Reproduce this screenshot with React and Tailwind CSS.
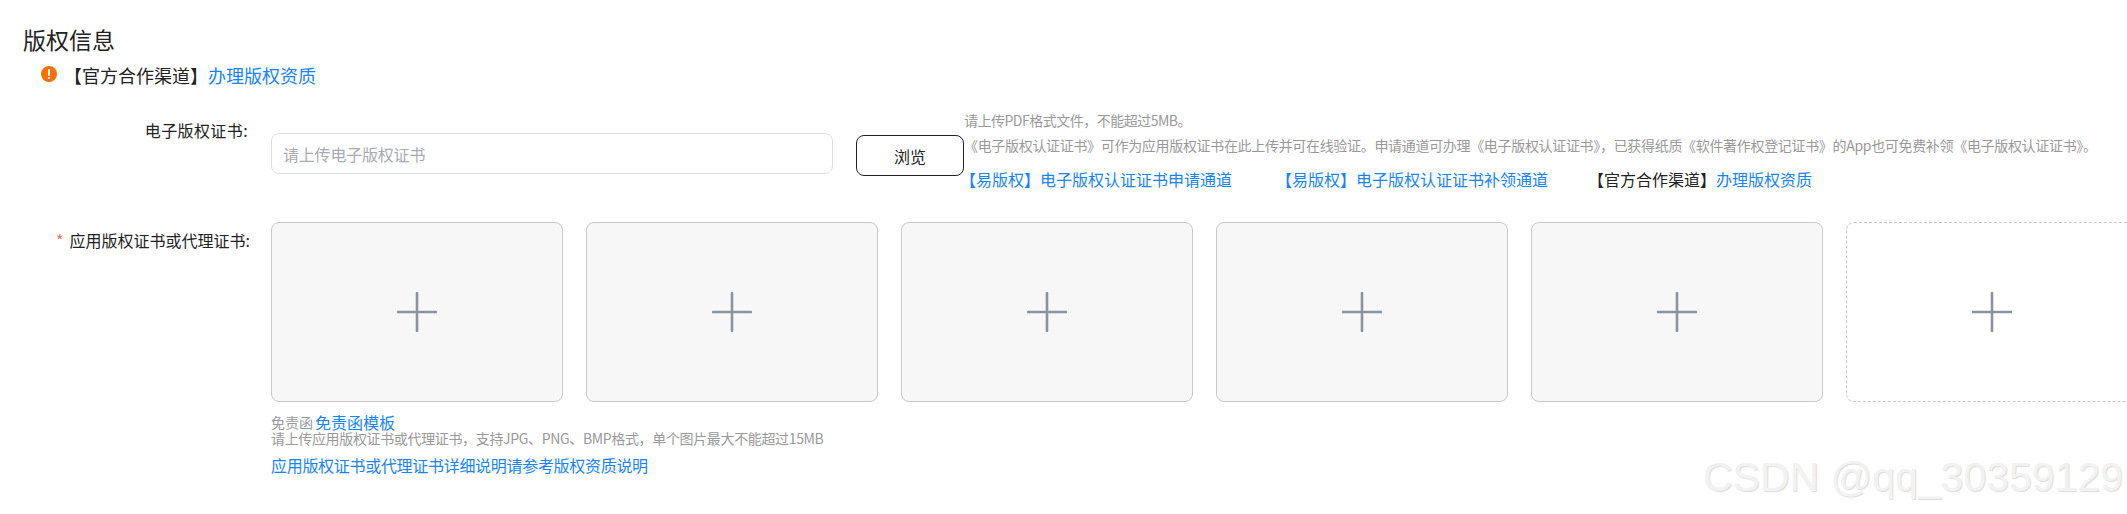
const FONT = "font-['Noto_Sans_CJK_SC','Liberation_Sans',sans-serif]";
const COMMA = "\uFF0C";

function Plus() {
  return (
    <svg width="40" height="40" viewBox="0 0 40 40" fill="none" stroke="#8c939d" strokeWidth="2.6" strokeLinecap="round">
      <path d="M20 1V39M1 20H39" />
    </svg>
  );
}

function Card({ dashed }) {
  return (
    <div
      className={
        "w-[292px] h-[180px] shrink-0 flex items-center justify-center rounded-lg border " +
        (dashed ? "border-dashed border-[#c9c9c9] bg-white" : "border-[#c9c9c9] bg-[#f7f7f7]")
      }
    >
      <Plus />
    </div>
  );
}

export default function App() {
  return (
    <div className={"relative w-[2127px] h-[514px] overflow-hidden bg-white text-[#222] " + FONT}>
      <div className="pt-[24px] pl-[23px]">
        <h2 className="text-[23px] leading-[30px] font-normal">版权信息</h2>
        <div className="mt-[6px] ml-[18px] flex items-center h-[30px]">
          <svg width="16" height="16" viewBox="0 0 16 16" className="-mt-[3px]">
            <circle cx="8" cy="8" r="8" fill="#fa6f00" />
            <rect x="7" y="3" width="2" height="7" rx="1" fill="#fff" />
            <rect x="7" y="11" width="2" height="2" rx="1" fill="#fff" />
          </svg>
          <span className="ml-[7px] text-[18px] leading-[30px]">
            【官方合作渠道】<a className="text-[#1684fc]">办理版权资质</a>
          </span>
        </div>
      </div>

      <div className="flex mt-[2px]">
        <div className="w-[248px] shrink-0 pt-[26px] text-right text-[16px] leading-[24px] tracking-[0.4px]">电子版权证书:</div>
        <div className="ml-[23px] flex items-start">
          <div className="mt-[41px] w-[562px] h-[41px] flex items-center rounded-lg border border-[#dcdfe6] px-[11px] text-[16px] tracking-[-0.2px] text-[#a8abb2]">
            请上传电子版权证书
          </div>
          <button className="mt-[43px] ml-[23px] w-[108px] h-[41px] rounded-lg border border-[#222] text-[16px] bg-white">
            浏览
          </button>
          <div className="pt-[18px]">
            <div className="text-[14px] leading-[20px] text-[#999] tracking-[-0.5px]">请上传PDF格式文件{COMMA}不能超过5MB。</div>
            <div className="mt-[3px] text-[14px] leading-[24px] text-[#999] whitespace-nowrap tracking-[-0.32px]">
              《电子版权认证证书》可作为应用版权证书在此上传并可在线验证。申请通道可办理《电子版权认证证书》{COMMA}已获得纸质《软件著作权登记证书》的App也可免费补领《电子版权认证证书》。
            </div>
            <div className="mt-[10px] ml-[-4px] flex text-[16px] leading-[24px] whitespace-nowrap">
              <a className="w-[316px] text-[#1684fc]">【易版权】电子版权认证证书申请通道</a>
              <a className="w-[312px] text-[#1684fc]">【易版权】电子版权认证证书补领通道</a>
              <span>【官方合作渠道】<a className="text-[#1684fc]">办理版权资质</a></span>
            </div>
          </div>
        </div>
      </div>

      <div className="flex mt-[31px]">
        <div className="w-[250px] shrink-0 text-right text-[16px] leading-[24px] mt-[6px]">
          <span className="text-[#f56c6c] mr-[6px]">*</span>应用版权证书或代理证书:
        </div>
        <div className="ml-[21px]">
          <div className="flex gap-[23px]">
            <Card />
            <Card />
            <Card />
            <Card />
            <Card />
            <Card dashed />
          </div>
          <div className="mt-[12px] leading-[16px] h-[16px] flex items-center">
            <span className="text-[14px] leading-[16px] text-[#999]">免责函</span>
            <a className="ml-[2px] text-[16px] leading-[16px] text-[#1684fc]">免责函模板</a>
          </div>
          <div className="mt-[1px] text-[14px] leading-[14px] text-[#999] whitespace-nowrap tracking-[-0.35px]">
            请上传应用版权证书或代理证书{COMMA}支持JPG、PNG、BMP格式{COMMA}单个图片最大不能超过15MB
          </div>
          <div className="mt-[8px] text-[16px] leading-[24px] text-[#1684fc] tracking-[-0.3px]">
            应用版权证书或代理证书详细说明请参考版权资质说明
          </div>
        </div>
      </div>

      <div className="absolute left-[1703px] top-[453px] font-['Liberation_Sans',sans-serif] text-[41px] leading-[48px] whitespace-nowrap text-[#f2f2f2] [text-shadow:1px_1px_1px_#dcdcdc]">
        CSDN @qq_30359129
      </div>
    </div>
  );
}
